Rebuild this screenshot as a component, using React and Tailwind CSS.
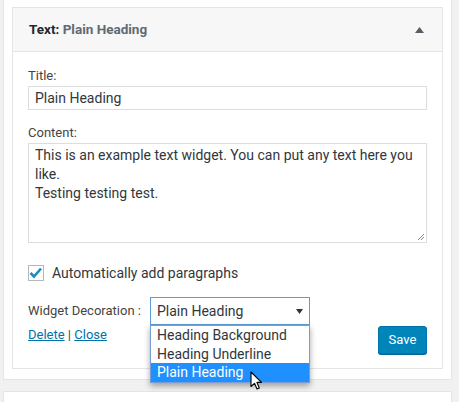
import React from 'react';

function Cursor() {
  return (
    <svg width="14" height="20" viewBox="0 0 14 20" className="absolute z-20 left-[250px] top-[371px]">
      <path d="M1 1 L1 15.5 L4.5 12.3 L7 18 L9.3 17 L6.9 11.4 L11.5 11.4 Z" fill="#fff" stroke="#000" strokeWidth="1.1" strokeLinejoin="round" />
    </svg>
  );
}

export default function App() {
  return (
    <div className="relative w-[459px] h-[402px] bg-[#f1f1f1] overflow-hidden text-[#32373c]" style={{ fontFamily: 'Roboto, sans-serif' }}>
      <div className="ml-[3px] w-[449px] bg-white border border-[#e5e5e5] border-t-0 pt-[7px] px-[8px] pb-[10px]">
        <div className="border border-[#e5e5e5]">
          <div className="h-[44px] bg-[#f7f7f7] border-b border-[#e5e5e5] flex items-center justify-between pl-[16px] pr-[18px]">
            <div className="text-[13.5px] font-bold">
              <span className="text-[#23282d]">Text:</span>{' '}
              <span className="text-[#606a73]">Plain Heading</span>
            </div>
            <svg width="9" height="6" viewBox="0 0 9 6"><path d="M0 6 L4.5 0 L9 6 Z" fill="#555d66" /></svg>
          </div>
          <div className="px-[15px] pt-[15px] pb-[14px] text-[13px] leading-[18px]">
            <div className="text-[#444]">Title:</div>
            <div className="mt-[1px] h-[24px] border border-[#ddd] flex items-center px-[6px] text-[14px] text-[#32373c]">Plain Heading</div>
            <div className="mt-[14px] text-[#444]">Content:</div>
            <div className="relative mt-[1px] h-[100px] border border-[#ddd] px-[6px] pt-[2px] text-[14px] leading-[19px] text-[#32373c]">
              This is an example text widget. You can put any text here you like.
              <br />
              Testing testing test.
              <svg width="8" height="8" viewBox="0 0 8 8" className="absolute right-[1px] bottom-[1px]">
                <path d="M7 1 L1 7 M7 4 L4 7" stroke="#666" strokeWidth="0.8" />
              </svg>
            </div>
            <div className="mt-[21px] flex items-center gap-[8px]">
              <div className="w-[16px] h-[16px] border border-[#b4b9be] flex items-center justify-center">
                <svg width="14" height="12" viewBox="0 0 14 12"><path d="M1.5 6 L5 9.5 L12 1.5" fill="none" stroke="#1e8cbe" strokeWidth="2.6" /></svg>
              </div>
              <span className="text-[14px] text-[#32373c]">Automatically add paragraphs</span>
            </div>
            <div className="mt-[15px] flex items-start justify-between">
              <div>
                <div className="flex items-center">
                  <span className="w-[122px] text-[#444]">Widget Decoration :</span>
                  <div className="relative">
                    <div className="w-[160px] h-[28px] border border-[#5b9dd9] flex items-center justify-between pl-[6px] pr-[6px] text-[14px] text-[#32373c]">
                      <span>Plain Heading</span>
                      <svg width="7" height="5" viewBox="0 0 7 5"><path d="M0 0 L7 0 L3.5 5 Z" fill="#333" /></svg>
                    </div>
                    <div className="absolute left-0 top-[28px] w-[160px] bg-white border border-[#7a9cd3] shadow-[0_3px_6px_rgba(0,0,0,0.35)] text-[14px] leading-[18.5px] text-[#32373c] z-10">
                      <div className="px-[6px]">Heading Background</div>
                      <div className="px-[6px]">Heading Underline</div>
                      <div className="px-[6px] bg-[#1e90ff] text-white">Plain Heading</div>
                    </div>
                  </div>
                </div>
                <div className="mt-[1px] text-[13px]">
                  <a className="text-[#0073aa] underline">Delete</a>
                  <span className="text-[#444]"> | </span>
                  <a className="text-[#0073aa] underline">Close</a>
                </div>
              </div>
              <button className="mt-[29px] w-[49px] h-[28px] bg-[#0085ba] border border-[#0073aa] rounded-[3px] text-white text-[13px] shadow-[0_1px_0_#006799]">Save</button>
            </div>
          </div>
        </div>
      </div>
      <div className="ml-[3px] mt-[11px] w-[449px] h-[40px] bg-white border border-[#e5e5e5]" />
      <Cursor />
    </div>
  );
}
